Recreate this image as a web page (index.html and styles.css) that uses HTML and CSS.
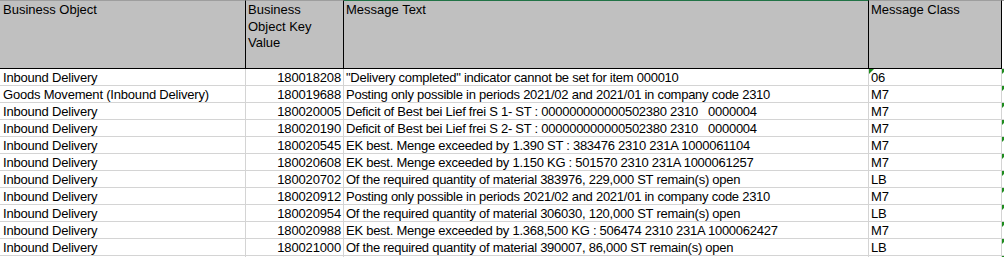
FILE: index.html
```html
<!DOCTYPE html>
<html>
<head>
<meta charset="utf-8">
<link rel="stylesheet" href="styles.css">
</head>
<body>
<div class="sheet">
  <div class="row head">
    <div class="cell c1">Business Object</div>
    <div class="cell c2">Business Object Key Value</div>
    <div class="cell c3 sel">Message Text</div>
    <div class="cell c4">Message Class</div>
    <div class="cell c5"></div>
  </div>
  <div class="row">
    <div class="cell c1">Inbound Delivery</div>
    <div class="cell c2 num">180018208</div>
    <div class="cell c3">"Delivery completed" indicator cannot be set for item 000010</div>
    <div class="cell c4 flag">06</div>
    <div class="cell c5 flag"></div>
  </div>
  <div class="row">
    <div class="cell c1">Goods Movement (Inbound Delivery)</div>
    <div class="cell c2 num">180019688</div>
    <div class="cell c3">Posting only possible in periods 2021/02 and 2021/01 in company code 2310</div>
    <div class="cell c4">M7</div>
    <div class="cell c5 flag"></div>
  </div>
  <div class="row">
    <div class="cell c1">Inbound Delivery</div>
    <div class="cell c2 num">180020005</div>
    <div class="cell c3">Deficit of Best bei Lief frei S 1- ST : 000000000000502380 2310   0000004</div>
    <div class="cell c4">M7</div>
    <div class="cell c5 flag"></div>
  </div>
  <div class="row">
    <div class="cell c1">Inbound Delivery</div>
    <div class="cell c2 num">180020190</div>
    <div class="cell c3">Deficit of Best bei Lief frei S 2- ST : 000000000000502380 2310   0000004</div>
    <div class="cell c4">M7</div>
    <div class="cell c5 flag"></div>
  </div>
  <div class="row">
    <div class="cell c1">Inbound Delivery</div>
    <div class="cell c2 num">180020545</div>
    <div class="cell c3">EK best. Menge exceeded by 1.390 ST : 383476 2310 231A 1000061104</div>
    <div class="cell c4">M7</div>
    <div class="cell c5 flag"></div>
  </div>
  <div class="row">
    <div class="cell c1">Inbound Delivery</div>
    <div class="cell c2 num">180020608</div>
    <div class="cell c3">EK best. Menge exceeded by 1.150 KG : 501570 2310 231A 1000061257</div>
    <div class="cell c4">M7</div>
    <div class="cell c5 flag"></div>
  </div>
  <div class="row">
    <div class="cell c1">Inbound Delivery</div>
    <div class="cell c2 num">180020702</div>
    <div class="cell c3">Of the required quantity of material 383976, 229,000 ST remain(s) open</div>
    <div class="cell c4">LB</div>
    <div class="cell c5 flag"></div>
  </div>
  <div class="row">
    <div class="cell c1">Inbound Delivery</div>
    <div class="cell c2 num">180020912</div>
    <div class="cell c3">Posting only possible in periods 2021/02 and 2021/01 in company code 2310</div>
    <div class="cell c4">M7</div>
    <div class="cell c5 flag"></div>
  </div>
  <div class="row">
    <div class="cell c1">Inbound Delivery</div>
    <div class="cell c2 num">180020954</div>
    <div class="cell c3">Of the required quantity of material 306030, 120,000 ST remain(s) open</div>
    <div class="cell c4">LB</div>
    <div class="cell c5 flag"></div>
  </div>
  <div class="row">
    <div class="cell c1">Inbound Delivery</div>
    <div class="cell c2 num">180020988</div>
    <div class="cell c3">EK best. Menge exceeded by 1.368,500 KG : 506474 2310 231A 1000062427</div>
    <div class="cell c4">M7</div>
    <div class="cell c5 flag"></div>
  </div>
  <div class="row">
    <div class="cell c1">Inbound Delivery</div>
    <div class="cell c2 num">180021000</div>
    <div class="cell c3">Of the required quantity of material 390007, 86,000 ST remain(s) open</div>
    <div class="cell c4">LB</div>
    <div class="cell c5 flag"></div>
  </div>
  <div class="row">
    <div class="cell c1"></div>
    <div class="cell c2"></div>
    <div class="cell c3"></div>
    <div class="cell c4"></div>
    <div class="cell c5 flag"></div>
  </div>
</div>
</body>
</html>
```
FILE: styles.css
```css
html, body {
  margin: 0;
  padding: 0;
  background: #ffffff;
}
.sheet {
  width: 1004px;
  height: 257px;
  overflow: hidden;
  font-family: "Liberation Sans", Arial, sans-serif;
  font-size: 13px;
  color: #000000;
}
.row {
  display: grid;
  grid-template-columns: 246px 98px 525px 133px 2px;
  height: 17px;
}
.cell {
  box-sizing: border-box;
  border-right: 1px solid #d4d4d4;
  border-bottom: 1px solid #d4d4d4;
  padding: 1px 2px 0 3px;
  line-height: 15px;
  letter-spacing: -0.2px;
  white-space: pre;
  overflow: hidden;
  position: relative;
}
.c2 { padding-left: 2px; }
.c3 { padding-left: 2px; letter-spacing: -0.26px; }
.c4 { padding-left: 2px; }
.c5 { border-right: none; padding: 0; }
.num { text-align: right; padding-right: 2px; letter-spacing: -0.15px; }
.head {
  height: 69px;
}
.head .cell {
  background: #c0c0c0;
  border-top: 1px solid #9e9e9e;
  border-right: 1px solid #000000;
  border-bottom: 1px solid #000000;
  white-space: normal;
  line-height: 16.7px;
  letter-spacing: 0;
  padding-top: 1px;
}
.head .c1 { padding-left: 3px; }
.head .c2 { padding-left: 2px; padding-right: 4px; }
.head .sel { border-top-color: #217346; }
.head .c5 { background: #ffffff; border-right: none; border-bottom-color: #d4d4d4; }
.flag::before {
  content: "";
  position: absolute;
  left: 0;
  top: 0;
  width: 0;
  height: 0;
  border-top: 5px solid #1e8c1e;
  border-right: 5px solid transparent;
}
```
